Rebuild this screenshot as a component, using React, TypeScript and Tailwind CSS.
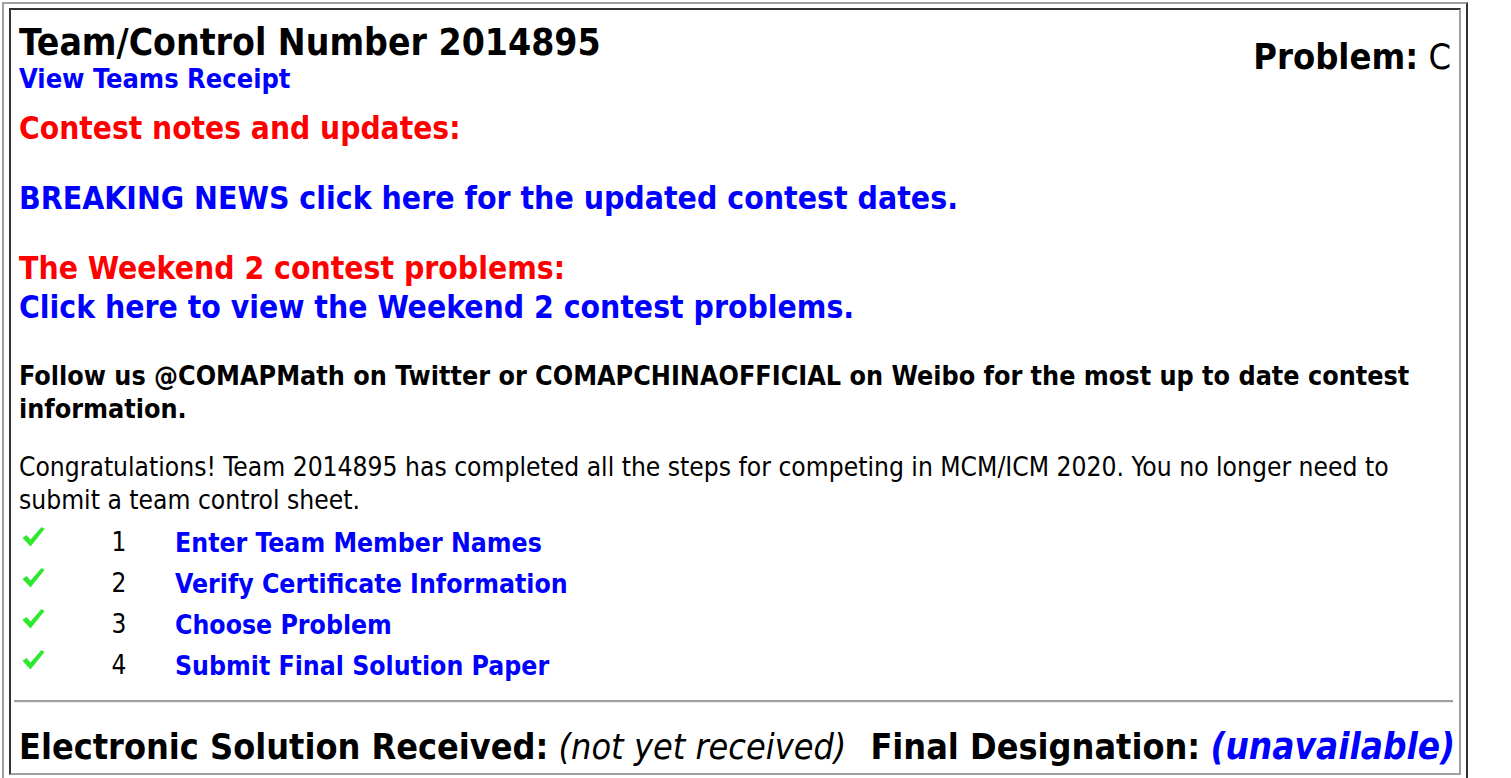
import React from "react";

const steps = [
  "Enter Team Member Names",
  "Verify Certificate Information",
  "Choose Problem",
  "Submit Final Solution Paper",
];

function Check() {
  return (
    <svg width="23" height="20" viewBox="0 0 23 20" className="mt-[5px]">
      <path d="M0.5 11 L4.5 8 L8.5 12.5 L19.5 0 L22.5 2 L8.5 19.5 Z" fill="#2ee82e" />
    </svg>
  );
}

export default function App() {
  return (
    <div className="min-h-screen bg-white pl-[2px] pt-[2px] font-['DejaVu_Sans_Condensed','DejaVu_Sans',sans-serif] text-black">
      <div className="w-[1466px] border-2 border-t-[#a0a0a0] border-l-[#a0a0a0] border-r-[#333] border-b-[#333] px-[5px] pt-[4px] pb-[5px]">
        <div className="border-2 border-t-[#333] border-l-[#333] border-r-[#a0a0a0] border-b-[#a0a0a0] pl-[8px] pr-[8px] pt-[13px] pb-[6px]">
          <div className="flex items-center justify-between">
            <div>
              <h1 className="text-[37px] font-bold leading-[40px]">Team/Control Number 2014895</h1>
              <a href="#" className="block text-[27px] font-bold leading-[32px] text-[#0000ff]">View Teams Receipt</a>
            </div>
            <div className="pb-[4px] text-[36px] leading-[40px]">
              <span className="font-bold">Problem:</span> C
            </div>
          </div>

          <h2 className="mt-[15px] text-[31.4px] font-bold leading-[36px] text-[#ff0000]">Contest notes and updates:</h2>

          <a href="#" className="mt-[34px] block text-[31.7px] font-bold leading-[36px] text-[#0000ff]">
            BREAKING NEWS click here for the updated contest dates.
          </a>

          <h2 className="mt-[33px] text-[31.6px] font-bold leading-[39px] text-[#ff0000]">The Weekend 2 contest problems:</h2>
          <a href="#" className="block text-[31.6px] font-bold leading-[39px] text-[#0000ff]">
            Click here to view the Weekend 2 contest problems.
          </a>

          <p className="mt-[32px] text-[26.7px] font-bold leading-[33px]">
            Follow us @COMAPMath on Twitter or COMAPCHINAOFFICIAL on Weibo for the most up to date contest information.
          </p>

          <p className="mt-[26px] text-[26.2px] leading-[33px]">
            Congratulations! Team 2014895 has completed all the steps for competing in MCM/ICM 2020. You no longer need to submit a team control sheet.
          </p>

          <div className="mt-[5px]">
            {steps.map((s, i) => (
              <div key={s} className="flex h-[41px] items-start">
                <div className="w-[76px] pl-[3px]">
                  <Check />
                </div>
                <div className="w-[48px] text-center text-[26px] leading-[41px]">{i + 1}</div>
                <a href="#" className="pl-[32px] text-[26.4px] font-bold leading-[41px] text-[#0000ff]">{s}</a>
              </div>
            ))}
          </div>

          <hr className="ml-[-5px] mr-[-2px] mt-[14px] border-t-2 border-b border-t-[#a0a0a0] border-b-[#eee]" />

          <div className="mt-[24px] whitespace-nowrap text-[35.7px] leading-[40px]">
            <span className="font-bold">Electronic Solution Received:</span>{" "}
            <span className="italic">(not yet received)</span>
            <span className="ml-[24px] font-bold">Final Designation:</span>{" "}
            <span className="text-[36.6px] font-bold italic text-[#0000ff]">(unavailable)</span>
          </div>
        </div>
      </div>
    </div>
  );
}
